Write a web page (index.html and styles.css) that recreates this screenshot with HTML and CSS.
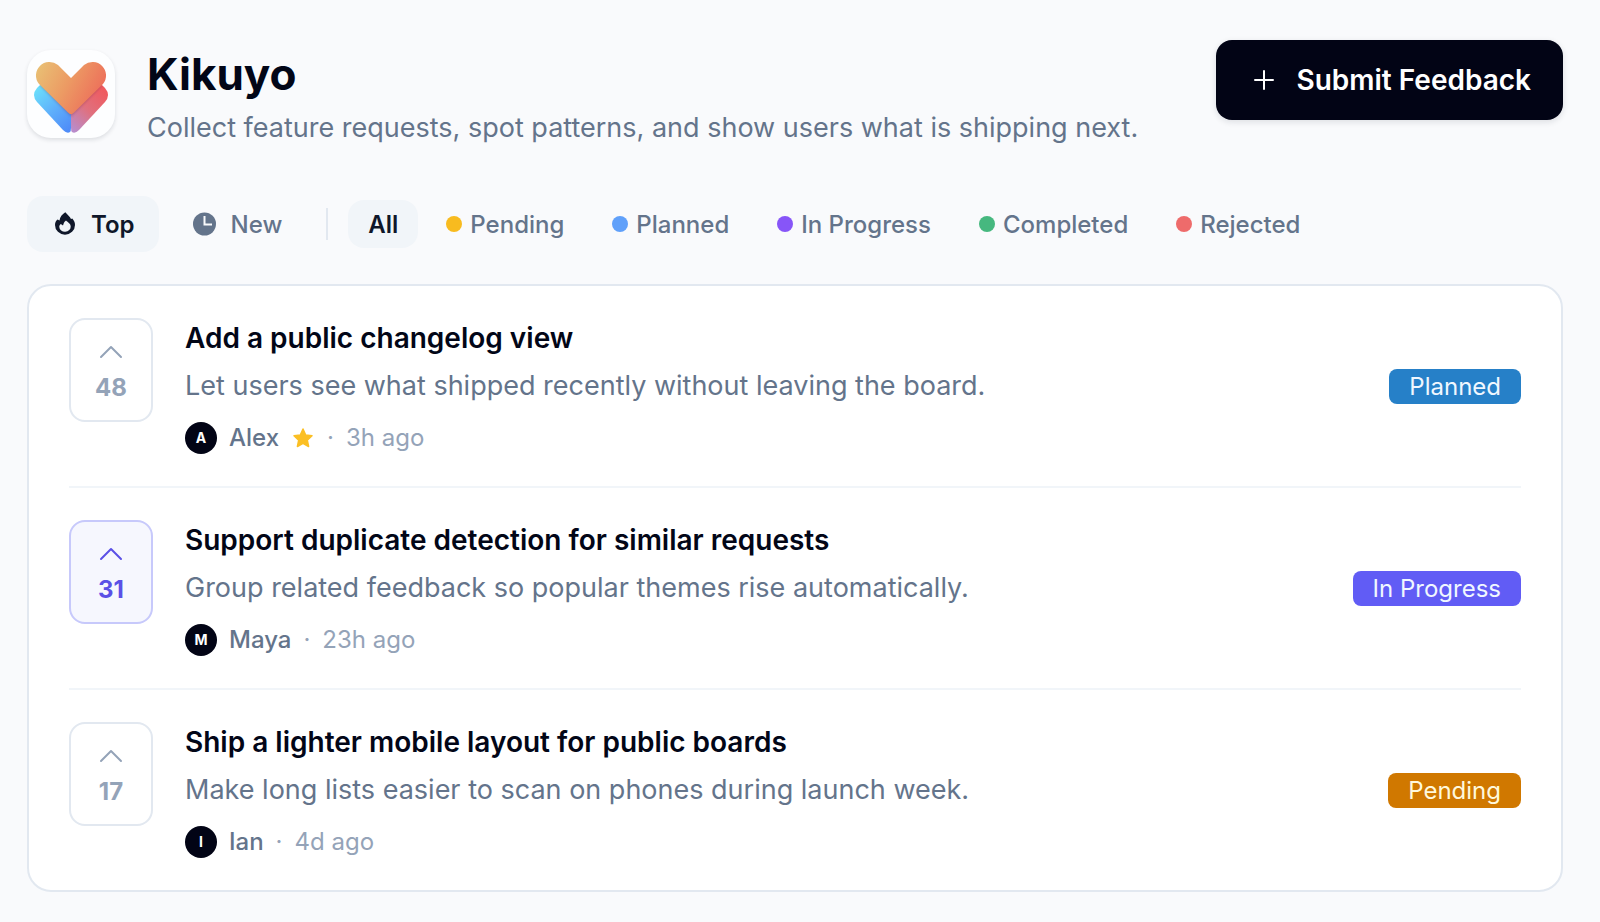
FILE: index.html
```html
<!DOCTYPE html>
<html lang="en">
<head>
  <meta charset="UTF-8" />
  <meta name="viewport" content="width=device-width, initial-scale=1.0"/>
  <title>Kikuyo</title>
  <link rel="stylesheet" href="styles.css">
</head>
<body>
  <header class="header">
    <div class="logo">
      <svg viewBox="0 0 88 88" width="88" height="88" aria-hidden="true">
        <defs>
          <linearGradient id="blue" gradientUnits="userSpaceOnUse" x1="10" y1="40" x2="44" y2="78">
            <stop offset="0" stop-color="#6adcfb"/>
            <stop offset="0.5" stop-color="#5fb0fb"/>
            <stop offset="1" stop-color="#4f8cf8"/>
          </linearGradient>
          <linearGradient id="red" gradientUnits="userSpaceOnUse" x1="78" y1="42" x2="44" y2="78">
            <stop offset="0" stop-color="#ef5b60"/>
            <stop offset="0.5" stop-color="#e0707e"/>
            <stop offset="1" stop-color="#b98ccb"/>
          </linearGradient>
          <linearGradient id="heart" gradientUnits="userSpaceOnUse" x1="10" y1="18" x2="68" y2="48">
            <stop offset="0" stop-color="#e9bf74"/>
            <stop offset="0.5" stop-color="#ec9c64"/>
            <stop offset="1" stop-color="#ed735b"/>
          </linearGradient>
          <filter id="soft" x="-20%" y="-20%" width="140%" height="140%">
            <feGaussianBlur stdDeviation="1.5"/>
          </filter>
          <clipPath id="base">
            <path d="M20 30 L10 38 Q4 45 10 52 L36 80 Q40 84 44 81 Q48 84 52 80 L78 52 Q84 45 78 38 L68 30 Z"/>
          </clipPath>
        </defs>
        <path fill="url(#blue)" d="M20 28 L10 38 Q4 45 10 52 L36 80 Q40 84 43 82 Q44 81 44 78 L44 50 Z"/>
        <path fill="url(#red)" d="M68 28 L78 38 Q84 45 78 52 L52 80 Q48 84 45 82 Q44 81 44 78 L44 50 Z"/>
        <g clip-path="url(#base)">
          <path fill="#6b2b50" opacity="0.4" filter="url(#soft)" d="M12 34 L44 66 L76 34 Z"/>
        </g>
        <path fill="url(#heart)" d="M44 28 L31 15 A13.500 13.500 0 0 0 12 34 L41 62.500 Q44 66 47 62.500 L76 34 A13.500 13.500 0 0 0 57 15 Z"/>
      </svg>
    </div>
    <div class="intro">
      <h1>Kikuyo</h1>
      <p>Collect feature requests, spot patterns, and show users what is shipping next.</p>
    </div>
    <button class="submit">
      <svg viewBox="0 0 32 32" width="32" height="32" aria-hidden="true"><path d="M16 7v18M7 16h18" fill="none" stroke="currentColor" stroke-width="2" stroke-linecap="round"/></svg>
      Submit Feedback
    </button>
  </header>

  <nav class="filters">
    <button class="sort active">
      <svg viewBox="0 0 28 28" width="28" height="28" aria-hidden="true"><path fill="currentColor" fill-rule="evenodd" d="M14.300 2.300 C16.500 5 19 6.500 20 9 L21.300 8.500 C23.300 10.800 24 12.700 24 15 A10 9.700 0 0 1 4 15 C4 12.500 5 10.500 6.500 9.500 L8.500 10.500 C9 7 11 4.500 14.300 2.300 Z M15 10.500 C12.500 12 12.800 14 12 15.500 L9.800 14 C8.500 15.200 8.300 16 8.300 17 A5.700 5 0 0 0 19.700 16.500 C19.700 13.500 17 12.500 15 10.500 Z"/></svg>
      Top
    </button>
    <button class="sort">
      <svg viewBox="0 0 28 28" width="28" height="28" aria-hidden="true"><circle cx="13.500" cy="14" r="11.500" fill="currentColor"/><path d="M13.500 6v8.500h7.500" fill="none" stroke="#f9fafc" stroke-width="2"/></svg>
      New
    </button>
    <span class="divider"></span>
    <div class="statuses">
      <button class="status active">All</button>
      <button class="status"><span class="dot yellow"></span>Pending</button>
      <button class="status"><span class="dot blue"></span>Planned</button>
      <button class="status"><span class="dot violet"></span>In Progress</button>
      <button class="status"><span class="dot green"></span>Completed</button>
      <button class="status"><span class="dot red"></span>Rejected</button>
    </div>
  </nav>

  <main class="board">
    <article class="item">
      <button class="vote" aria-label="Upvote, 48 votes">
        <svg viewBox="0 0 32 32" width="32" height="32" aria-hidden="true"><path d="M6 21l10-10 10 10" fill="none" stroke="currentColor" stroke-width="2" stroke-linecap="round" stroke-linejoin="round"/></svg>
        <span>48</span>
      </button>
      <div class="content">
        <h2>Add a public changelog view</h2>
        <p>Let users see what shipped recently without leaving the board.</p>
        <div class="meta">
          <span class="avatar">A</span>
          <span class="name">Alex</span>
          <svg viewBox="0 0 24 24" width="24" height="24" aria-hidden="true"><path d="M12 3l2.700 6 6.300.700-4.700 4.400 1.300 6.400-5.600-3.200-5.600 3.200 1.300-6.400L3 9.700 9.300 9z" fill="#fbbf24" stroke="#fbbf24" stroke-width="1.500" stroke-linejoin="round"/></svg>
          <span>·</span>
          <span>3h ago</span>
        </div>
      </div>
      <span class="badge planned">Planned</span>
    </article>

    <article class="item">
      <button class="vote voted" aria-label="Remove upvote, 31 votes">
        <svg viewBox="0 0 32 32" width="32" height="32" aria-hidden="true"><path d="M6 21l10-10 10 10" fill="none" stroke="currentColor" stroke-width="2" stroke-linecap="round" stroke-linejoin="round"/></svg>
        <span>31</span>
      </button>
      <div class="content">
        <h2>Support duplicate detection for similar requests</h2>
        <p>Group related feedback so popular themes rise automatically.</p>
        <div class="meta">
          <span class="avatar">M</span>
          <span class="name">Maya</span>
          <span>·</span>
          <span>23h ago</span>
        </div>
      </div>
      <span class="badge progress">In Progress</span>
    </article>

    <article class="item">
      <button class="vote" aria-label="Upvote, 17 votes">
        <svg viewBox="0 0 32 32" width="32" height="32" aria-hidden="true"><path d="M6 21l10-10 10 10" fill="none" stroke="currentColor" stroke-width="2" stroke-linecap="round" stroke-linejoin="round"/></svg>
        <span>17</span>
      </button>
      <div class="content">
        <h2>Ship a lighter mobile layout for public boards</h2>
        <p>Make long lists easier to scan on phones during launch week.</p>
        <div class="meta">
          <span class="avatar">I</span>
          <span class="name">Ian</span>
          <span>·</span>
          <span>4d ago</span>
        </div>
      </div>
      <span class="badge pending">Pending</span>
    </article>
  </main>
</body>
</html>
```
FILE: styles.css
```css
* {
  box-sizing: border-box;
}
body {
  margin: 0;
  padding: 40px 37px 30px 27px;
  background-color: #f9fafc;
  color: #020617;
  font-family: Inter, "Liberation Sans", sans-serif;
}
h1, h2, p {
  margin: 0;
}
button {
  border: 0;
  background: none;
  font-family: inherit;
  cursor: pointer;
}
svg {
  flex: none;
}
.header {
  display: flex;
  align-items: flex-start;
}
.logo {
  width: 88px;
  height: 88px;
  margin: 10px 32px 0 0;
  border-radius: 24px;
  background-color: #fdfeff;
  box-shadow: 0 2px 4px rgba(15, 23, 42, 0.12);
}
.intro {
  flex: 1;
}
.intro h1 {
  font-size: 44px;
  font-weight: 700;
  line-height: 68px;
}
.intro p {
  color: #64748b;
  font-size: 27px;
  line-height: 40px;
}
.submit {
  display: flex;
  align-items: center;
  gap: 16px;
  height: 80px;
  padding: 0 32px;
  border-radius: 16px;
  background-color: #020415;
  color: #fff;
  font-size: 28px;
  font-weight: 600;
  white-space: nowrap;
  box-shadow: 0 2px 6px rgba(15, 23, 42, 0.12);
}
.filters {
  display: flex;
  align-items: center;
  margin: 48px 0 32px;
}
.sort {
  display: flex;
  align-items: center;
  gap: 12px;
  height: 56px;
  margin-right: 8px;
  padding: 0 24px;
  border-radius: 16px;
  color: #64748b;
  font-size: 24px;
  font-weight: 500;
}
.active {
  background-color: #f1f5f9;
  color: #0f172a;
  font-weight: 600;
}
.divider {
  width: 2px;
  height: 32px;
  margin: 0 20px 0 12px;
  background-color: #e2e8f0;
}
.statuses {
  display: flex;
  gap: 8px;
}
.status {
  display: flex;
  align-items: center;
  gap: 8px;
  height: 48px;
  padding: 0 20px;
  border-radius: 16px;
  color: #64748b;
  font-size: 24px;
  font-weight: 500;
}
.status.active {
  color: #0f172a;
  font-weight: 600;
}
.dot {
  width: 16px;
  height: 16px;
  border-radius: 50%;
}
.yellow {
  background-color: #f8bb1f;
}
.blue {
  background-color: #60a0fa;
}
.violet {
  background-color: #8755f8;
}
.green {
  background-color: #46b87f;
}
.red {
  background-color: #ee6b6b;
}
.board {
  padding: 0 40px;
  border: 2px solid #e2e8f0;
  border-radius: 24px;
  background-color: #fff;
}
.item {
  display: flex;
  align-items: center;
  padding: 32px 0;
}
.item + .item {
  border-top: 2px solid #f1f5f9;
}
.vote {
  display: flex;
  flex-direction: column;
  align-items: center;
  justify-content: center;
  align-self: flex-start;
  gap: 4px;
  width: 84px;
  height: 104px;
  margin-right: 32px;
  border: 2px solid #e2e8f0;
  border-radius: 16px;
  color: #94a3b8;
  font-size: 24px;
  font-weight: 700;
  line-height: 32px;
}
.voted {
  border-color: #c7c9fb;
  background-color: #f6f7fe;
  color: #5b50e6;
}
.content {
  flex: 1;
}
.content h2 {
  font-size: 28px;
  font-weight: 600;
  line-height: 40px;
}
.content p {
  margin: 8px 0 16px;
  color: #64748b;
  font-size: 27px;
  line-height: 40px;
}
.meta {
  display: flex;
  align-items: center;
  gap: 12px;
  color: #94a3b8;
  font-size: 24px;
  line-height: 32px;
}
.avatar {
  width: 32px;
  height: 32px;
  border-radius: 50%;
  background-color: #020415;
  color: #fff;
  font-size: 14px;
  font-weight: 700;
  text-align: center;
}
.name {
  color: #64748b;
  font-weight: 500;
}
.badge {
  padding: 0 20px;
  border-radius: 8px;
  color: #f0f7ff;
  font-size: 24px;
  line-height: 35px;
}
.planned {
  background-color: #2680c8;
}
.progress {
  background-color: #615cf5;
}
.pending {
  background-color: #d07800;
  color: #fff8dc;
}
```
